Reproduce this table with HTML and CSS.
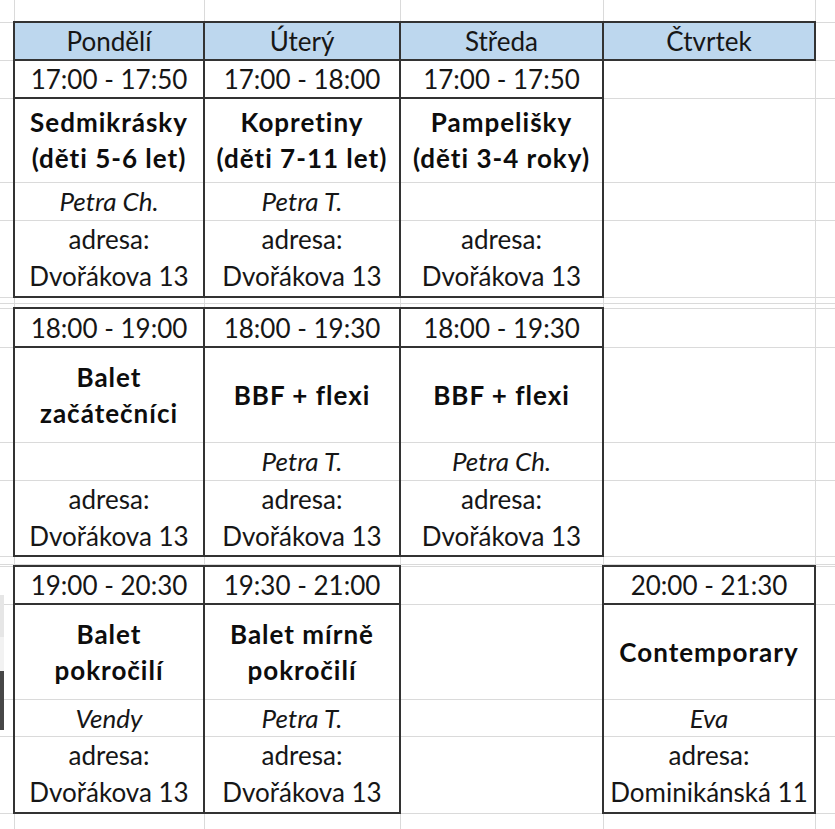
FILE: index.html
```html
<!DOCTYPE html>
<html lang="cs">
<head>
<meta charset="utf-8">
<title>Rozvrh</title>
<link rel="stylesheet" href="styles.css">
</head>
<body>
<div class="edge"></div>
<table class="sheet">
  <colgroup>
    <col class="w-m"><col class="w-a"><col class="w-b"><col class="w-c"><col class="w-d"><col class="w-e">
  </colgroup>
  <tr class="h22"><td></td><td></td><td></td><td></td><td></td><td></td></tr>
  <tr class="h38">
    <td></td>
    <td class="hd">Pondělí</td><td class="hd">Úterý</td><td class="hd">Středa</td><td class="hd">Čtvrtek</td>
    <td></td>
  </tr>
  <!-- block 1 -->
  <tr class="h37">
    <td></td>
    <td class="box cap">17:00 - 17:50</td><td class="box cap">17:00 - 18:00</td><td class="box cap">17:00 - 17:50</td>
    <td></td><td></td>
  </tr>
  <tr class="h84">
    <td></td>
    <td class="box ttl">Sedmikrásky<br>(děti 5-6 let)</td>
    <td class="box ttl">Kopretiny<br>(děti 7-11 let)</td>
    <td class="box ttl">Pampelišky<br>(děti 3-4 roky)</td>
    <td></td><td></td>
  </tr>
  <tr class="h38">
    <td></td>
    <td class="box ins">Petra Ch.</td><td class="box ins">Petra T.</td><td class="box ins"></td>
    <td></td><td></td>
  </tr>
  <tr class="h77">
    <td></td>
    <td class="box end adr">adresa:<br>Dvořákova 13</td>
    <td class="box end adr">adresa:<br>Dvořákova 13</td>
    <td class="box end adr">adresa:<br>Dvořákova 13</td>
    <td></td><td></td>
  </tr>
  <tr class="h6"><td></td><td></td><td></td><td></td><td></td><td></td></tr>
  <tr class="h5"><td></td><td></td><td></td><td></td><td></td><td></td></tr>
  <!-- block 2 -->
  <tr class="h39">
    <td></td>
    <td class="box cap">18:00 - 19:00</td><td class="box cap">18:00 - 19:30</td><td class="box cap">18:00 - 19:30</td>
    <td></td><td></td>
  </tr>
  <tr class="h95">
    <td></td>
    <td class="box ttl">Balet<br>začátečníci</td>
    <td class="box ttl">BBF + flexi</td>
    <td class="box ttl">BBF + flexi</td>
    <td></td><td></td>
  </tr>
  <tr class="h38">
    <td></td>
    <td class="box ins"></td><td class="box ins">Petra T.</td><td class="box ins">Petra Ch.</td>
    <td></td><td></td>
  </tr>
  <tr class="h76">
    <td></td>
    <td class="box end adr">adresa:<br>Dvořákova 13</td>
    <td class="box end adr">adresa:<br>Dvořákova 13</td>
    <td class="box end adr">adresa:<br>Dvořákova 13</td>
    <td></td><td></td>
  </tr>
  <tr class="h8"><td></td><td></td><td></td><td></td><td></td><td></td></tr>
  <tr class="h2"><td></td><td></td><td></td><td></td><td></td><td></td></tr>
  <!-- block 3 -->
  <tr class="h37">
    <td></td>
    <td class="box cap">19:00 - 20:30</td><td class="box cap">19:30 - 21:00</td><td></td><td class="box cap">20:00 - 21:30</td>
    <td></td>
  </tr>
  <tr class="h95">
    <td></td>
    <td class="box ttl">Balet<br>pokročilí</td>
    <td class="box ttl">Balet mírně<br>pokročilí</td>
    <td></td>
    <td class="box ttl">Contemporary</td>
    <td></td>
  </tr>
  <tr class="h37">
    <td></td>
    <td class="box ins">Vendy</td><td class="box ins">Petra T.</td><td></td><td class="box ins">Eva</td>
    <td></td>
  </tr>
  <tr class="h77">
    <td></td>
    <td class="box end adr">adresa:<br>Dvořákova 13</td>
    <td class="box end adr">adresa:<br>Dvořákova 13</td>
    <td></td>
    <td class="box end adr">adresa:<br>Dominikánská 11</td>
    <td></td>
  </tr>
  <tr class="h30"><td></td><td></td><td></td><td></td><td></td><td></td></tr>
</table>
</body>
</html>
```

FILE: styles.css
```css
html, body {
  margin: 0;
  padding: 0;
  background: #ffffff;
}

body {
  position: relative;
  overflow: hidden;
  font-family: Lato, "Open Sans", "Liberation Sans", sans-serif;
  color: #161616;
}

.sheet {
  border-collapse: collapse;
  table-layout: fixed;
  width: 835px;
}

.w-m { width: 14px; }
.w-a { width: 190px; }
.w-b { width: 196px; }
.w-c { width: 203px; }
.w-d { width: 212px; }
.w-e { width: 20px; }

.sheet td {
  border: 1px solid #dadada;
  padding: 0;
  text-align: center;
  vertical-align: middle;
  font-size: 26px;
  line-height: 36px;
  white-space: nowrap;
  overflow: hidden;
}

.sheet tr:first-child td { border-top: none; }
.sheet td:first-child { border-left: none; }

.h2  { height: 2px; }
.h5  { height: 5px; }
.h6  { height: 6px; }
.h8  { height: 8px; }
.h22 { height: 22px; }
.h30 { height: 30px; }
.h37 { height: 37px; }
.h38 { height: 38px; }
.h39 { height: 39px; }
.h76 { height: 76px; }
.h77 { height: 77px; }
.h84 { height: 84px; }
.h95 { height: 95px; }

.sheet td.hd {
  background: #bdd7ee;
  border: 2px solid #333333;
}

.sheet td.box {
  border-left: 2px solid #333333;
  border-right: 2px solid #333333;
}

.sheet td.cap {
  border-top: 2px solid #333333;
  border-bottom: 2px solid #333333;
}

.sheet td.end {
  border-bottom: 2px solid #333333;
}

.sheet td.adr {
  line-height: 37px;
}

.ttl {
  font-weight: 700;
  font-size: 30px;
  letter-spacing: 1px;
  color: #0d0d0d;
}

.ins {
  font-style: italic;
  font-size: 26.5px;
}

.edge {
  position: absolute;
  left: 0;
  top: 595px;
  width: 4px;
  height: 135px;
  background: linear-gradient(#e6e6e6 0 42px, #f2f2f2 42px 76px, #474747 76px 135px);
}
```
